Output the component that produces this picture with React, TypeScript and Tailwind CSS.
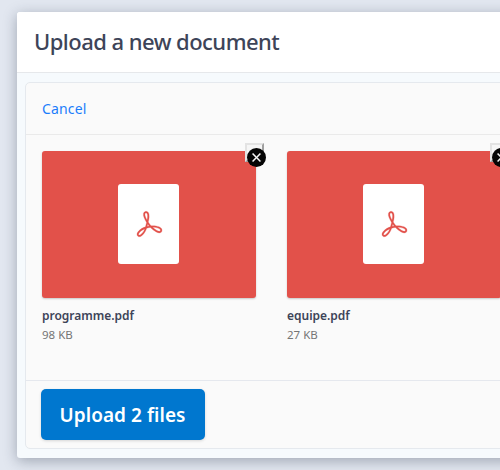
const files = [
  { name: 'programme.pdf', size: '98 KB' },
  { name: 'equipe.pdf', size: '27 KB' },
];

function PdfIcon() {
  return (
    <svg width="41" height="41" viewBox="0 0 25 25" aria-hidden="true">
      <path
        fill="#e2514a"
        stroke="#e2514a"
        strokeWidth="0.15"
        d="M9.766 8.295c-.691-1.843-.539-3.401.747-3.726 1.643-.414 2.505.938 2.39 3.299-.039.79-.194 1.662-.537 3.148.324.49.66.967 1.055 1.51.17.231.382.488.629.757 1.866-.128 3.653.114 4.918.655 1.487.635 2.192 1.685 1.614 2.84-.566 1.133-1.839 1.084-3.416.249-1.141-.604-2.457-1.634-3.51-2.707a13.467 13.467 0 0 0-2.238.426c-1.392 4.051-4.534 6.453-5.707 4.572-.986-1.58 1.38-4.206 4.914-5.375.097-.322.185-.656.264-1.001.08-.353.306-1.31.407-1.737-.678-1.059-1.2-2.031-1.53-2.91zm2.098 4.87c-.033.144-.068.287-.104.427l.033-.01-.012.038a14.065 14.065 0 0 1 1.02-.197l-.032-.033.052-.004a7.902 7.902 0 0 1-.208-.271c-.197-.27-.38-.526-.555-.775l-.006.028-.002-.003c-.076.323-.148.632-.186.8zm5.77 2.978c1.143.605 1.832.632 2.054.187.26-.519-.087-1.034-1.113-1.473-.911-.39-2.175-.608-3.55-.608.845.766 1.787 1.459 2.609 1.894zM6.559 18.789c.14.223.693.16 1.425-.413.827-.648 1.61-1.747 2.208-3.206-2.563 1.064-4.102 2.867-3.633 3.62zm5.345-10.97c.088-1.793-.351-2.48-1.146-2.28-.473.119-.564 1.05-.056 2.405.213.566.52 1.188.908 1.859.18-.858.268-1.453.294-1.984z"
      />
    </svg>
  );
}

function FileCard({ name, size }: { name: string; size: string }) {
  return (
    <li className="w-[214px] shrink-0">
      <div className="relative flex h-[147px] items-center justify-center rounded-[3px] bg-[#e2514a] pr-px pb-px shadow-[0_1px_2px_rgba(0,0,0,0.2)]">
        <div className="flex h-20 w-[61px] items-center justify-center rounded-[3px] bg-white">
          <PdfIcon />
        </div>
        <button
          aria-label={`Remove ${name}`}
          className="absolute -top-2 left-[203px] size-[19px] border-2 border-t-[#e3e3e3] border-r-[#a0a0a0] border-b-[#a0a0a0] border-l-[#e3e3e3] bg-[#f6f6f6]"
        >
          <svg className="absolute top-[3px] left-0 size-[19px]" viewBox="0 0 18 18">
            <circle cx="9" cy="9" r="9" fill="#050505" />
            <path
              fill="#fff"
              stroke="#fff"
              strokeWidth="0.4"
              d="M13 12.222l-.778.778L9 9.778 5.778 13 5 12.222 8.222 9 5 5.778 5.778 5 9 8.222 12.222 5l.778.778L9.778 9z"
            />
          </svg>
        </button>
      </div>
      <div className="mt-[9px] text-xs leading-[18px] font-semibold tracking-[-0.02px] whitespace-nowrap text-[#3d4458]">{name}</div>
      <div className="mt-px text-[11.5px] leading-[17px] whitespace-nowrap text-[#757575]">{size}</div>
    </li>
  );
}

export default function App() {
  return (
    <div className="h-[470px] w-[500px] overflow-hidden bg-[#e2e7f0] pt-3 pl-[17px] font-['Noto_Sans',sans-serif]">
      <main className="h-[446px] w-[560px] rounded-[3px] bg-[#f6fafd] shadow-[0_3px_14px_rgba(40,50,70,0.36)]">
        <header className="flex h-[61px] items-center rounded-t-[3px] border-b border-[#e6e8eb] bg-white pb-px pl-[17px]">
          <h1 className="text-[22px] font-medium tracking-[-0.53px] whitespace-nowrap text-[#3d4458]">
            Upload a new document
          </h1>
        </header>
        <section className="mt-[9px] ml-2 h-[367px] rounded-[5px] border border-[#e5e9ee] bg-[#fafafa]">
          <div className="flex h-[52px] items-center border-b border-[#eaeaea] pl-4">
            <button className="text-sm tracking-[0.15px] text-[#1b7dfa]">Cancel</button>
          </div>
          <ul className="flex h-[246px] gap-[31px] border-b border-[#e5e8ee] pt-4 pl-4">
            {files.map((file) => (
              <FileCard key={file.name} name={file.name} size={file.size} />
            ))}
          </ul>
          <div className="pt-2 pl-[15px]">
            <button className="h-[51px] w-[164px] rounded-[5px] bg-[#0077cf] pt-px pr-px text-[19px] font-semibold tracking-[0.05px] whitespace-nowrap text-white shadow-[0_1px_3px_rgba(0,0,0,0.15)]">
              Upload 2 files
            </button>
          </div>
        </section>
      </main>
    </div>
  );
}
